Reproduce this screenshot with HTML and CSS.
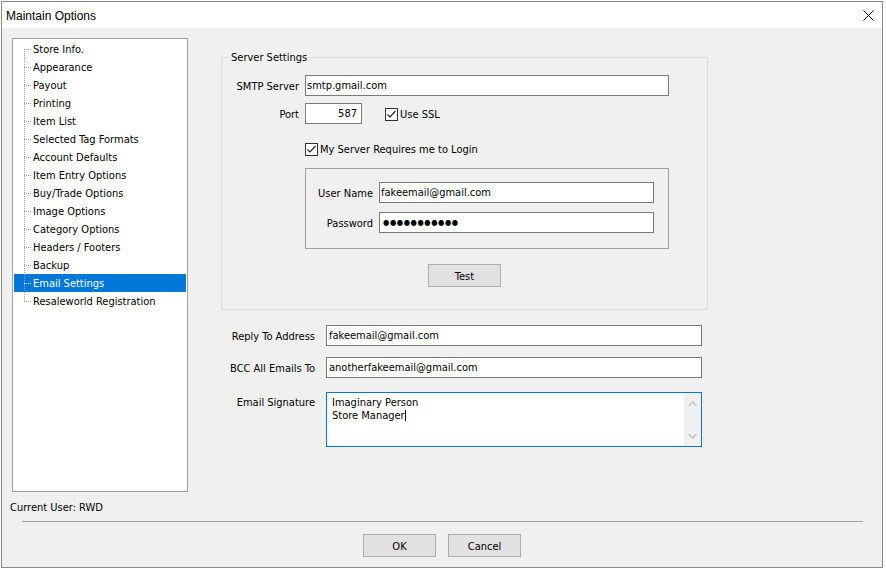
FILE: index.html
```html
<!DOCTYPE html>
<html lang="en">
<head>
    <meta charset="UTF-8">
    <meta name="viewport" content="width=device-width, initial-scale=1.0">
    <title>Maintain Options</title>
    <link rel="stylesheet" href="styles.css">
</head>
<body>
    <div class="window">
        <div class="titlebar">
            <span class="title">Maintain Options</span>
            <svg class="close" width="11" height="11" viewBox="0 0 11 11">
                <path d="M0.5 0.5 L10.5 10.5 M10.5 0.5 L0.5 10.5" stroke="#000" stroke-width="1" fill="none"/>
            </svg>
        </div>

        <div class="content">
            <div class="main">
                <!-- Menu lateral -->
                <div class="sidebar">
                    <ul class="tree">
                        <li>Store Info.</li>
                        <li>Appearance</li>
                        <li>Payout</li>
                        <li>Printing</li>
                        <li>Item List</li>
                        <li>Selected Tag Formats</li>
                        <li>Account Defaults</li>
                        <li>Item Entry Options</li>
                        <li>Buy/Trade Options</li>
                        <li>Image Options</li>
                        <li>Category Options</li>
                        <li>Headers / Footers</li>
                        <li>Backup</li>
                        <li class="selected">Email Settings</li>
                        <li>Resaleworld Registration</li>
                    </ul>
                    <div class="current-user">Current User: RWD</div>
                </div>

                <!-- Formulario -->
                <div class="form">
                    <div class="group">
                        <span class="group-title">Server Settings</span>

                        <div class="row">
                            <label class="label">SMTP Server</label>
                            <div class="field smtp">smtp.gmail.com</div>
                        </div>

                        <div class="row port-row">
                            <label class="label">Port</label>
                            <div class="field port">587</div>
                            <span class="check ssl">
                                <span class="box">
                                    <svg width="11" height="11" viewBox="0 0 11 11"><path d="M1.5 5.5 L4 8 L9.5 2" stroke="#222" stroke-width="1.2" fill="none"/></svg>
                                </span>
                                <span class="check-text">Use SSL</span>
                            </span>
                        </div>

                        <div class="row login-row">
                            <span class="check">
                                <span class="box">
                                    <svg width="11" height="11" viewBox="0 0 11 11"><path d="M1.5 5.5 L4 8 L9.5 2" stroke="#222" stroke-width="1.2" fill="none"/></svg>
                                </span>
                                <span class="check-text">My Server Requires me to Login</span>
                            </span>
                        </div>

                        <div class="login-box">
                            <div class="row">
                                <label class="label">User Name</label>
                                <div class="field login">fakeemail@gmail.com</div>
                            </div>
                            <div class="row password-row">
                                <label class="label">Password</label>
                                <div class="field login dots">●●●●●●●●●●●</div>
                            </div>
                        </div>

                        <div class="test-row">
                            <button class="btn">Test</button>
                        </div>
                    </div>

                    <div class="lower">
                        <div class="row">
                            <label class="label">Reply To Address</label>
                            <div class="field wide">fakeemail@gmail.com</div>
                        </div>
                        <div class="row bcc-row">
                            <label class="label">BCC All Emails To</label>
                            <div class="field wide">anotherfakeemail@gmail.com</div>
                        </div>
                        <div class="row signature-row">
                            <label class="label">Email Signature</label>
                            <div class="signature">
                                <div class="signature-text">
                                    Imaginary Person<br>
                                    Store Manager<span class="caret"></span>
                                </div>
                                <div class="scrollbar">
                                    <svg width="9" height="6" viewBox="0 0 9 6"><path d="M0.5 5 L4.5 1 L8.5 5" stroke="#c2c2c2" stroke-width="1.4" fill="none"/></svg>
                                    <svg width="9" height="6" viewBox="0 0 9 6"><path d="M0.5 1 L4.5 5 L8.5 1" stroke="#c2c2c2" stroke-width="1.4" fill="none"/></svg>
                                </div>
                            </div>
                        </div>
                    </div>
                </div>
            </div>

            <div class="footer">
                <div class="separator"></div>
                <div class="buttons">
                    <button class="btn">OK</button>
                    <button class="btn">Cancel</button>
                </div>
            </div>
        </div>
    </div>
</body>
</html>
```

FILE: styles.css
```css
* {
    margin: 0;
    padding: 0;
    box-sizing: border-box;
}

body {
    background: #fff;
    padding: 1px;
    font-family: "DejaVu Sans Condensed", "DejaVu Sans", sans-serif;
    font-stretch: condensed;
    font-size: 11px;
    color: #000;
}

.window {
    width: 882px;
    height: 567px;
    border: 1px solid #8a8a8a;
    background: #f0f0f0;
    display: flex;
    flex-direction: column;
}

/* Barra de titulo */
.titlebar {
    height: 26px;
    background: #fff;
    display: flex;
    justify-content: space-between;
    align-items: center;
    padding: 1px 8px 0 4px;
}

.title {
    font-family: "Liberation Sans", sans-serif;
    font-size: 12px;
    font-stretch: normal;
}

.content {
    flex: 1;
    display: flex;
    flex-direction: column;
}

.main {
    display: flex;
    padding: 10px 0 0 10px;
}

/* Arvore lateral */
.sidebar {
    width: 176px;
    display: flex;
    flex-direction: column;
}

.tree {
    height: 454px;
    background: #fff;
    border: 1px solid #a0a0a0;
    padding: 1px;
    list-style: none;
}

.tree li {
    position: relative;
    height: 18px;
    line-height: 18px;
    padding: 1px 0 0 19px;
    white-space: nowrap;
}

.tree li::before {
    content: "";
    position: absolute;
    left: 10px;
    top: 9px;
    width: 8px;
    height: 1px;
    background: repeating-linear-gradient(to right, #a0a0a0 0 1px, transparent 1px 2px);
}

.tree li::after {
    content: "";
    position: absolute;
    left: 10px;
    top: 0;
    width: 1px;
    height: 18px;
    background: repeating-linear-gradient(to bottom, #a0a0a0 0 1px, transparent 1px 2px);
}

.tree li:first-child::after {
    top: 9px;
    height: 9px;
}

.tree li:last-child::after {
    height: 10px;
}

.tree li.selected {
    background: #0078d7;
    color: #fff;
}

.tree li.selected::before {
    background: repeating-linear-gradient(to right, #d8e8f8 0 1px, transparent 1px 2px);
}

.current-user {
    margin: 9px 0 0 -2px;
    line-height: 14px;
}

/* Formulario */
.form {
    width: 487px;
    margin: 19px 0 0 33px;
}

.group {
    position: relative;
    border: 1px solid #dcdcdc;
    padding: 17px 0 22px 0;
}

.group-title {
    position: absolute;
    top: -8px;
    left: 7px;
    padding: 1px 2px 0;
    line-height: 14px;
    background: #f0f0f0;
}

.row {
    display: flex;
    align-items: center;
}

.label {
    width: 77px;
    margin-right: 6px;
    padding-top: 2px;
    text-align: right;
    white-space: nowrap;
}

.field {
    height: 21px;
    line-height: 19px;
    border: 1px solid #7a7a7a;
    background: #fff;
    padding: 0 2px 0 1px;
    white-space: nowrap;
}

.smtp {
    width: 364px;
}

.port-row {
    margin-top: 7px;
}

.port {
    width: 57px;
    text-align: right;
    padding-right: 4px;
}

.check {
    display: flex;
    align-items: center;
    gap: 2px;
    line-height: 14px;
}

.check-text {
    padding-top: 2px;
}

.box {
    width: 13px;
    height: 13px;
    border: 1px solid #333;
    background: #fff;
    display: flex;
}

.ssl {
    margin: 1px 0 0 23px;
}

.login-row {
    margin: 18px 0 0 83px;
    height: 14px;
}

.login-box {
    width: 364px;
    margin: 12px 0 0 83px;
    border: 1px solid #a0a0a0;
    padding: 13px 14px 15px 0;
}

.login-box .label {
    width: 67px;
}

.login {
    width: 275px;
}

.password-row {
    margin-top: 9px;
}

.dots {
    font-family: "DejaVu Sans", sans-serif;
    font-size: 8px;
    letter-spacing: 0.6px;
    padding-left: 3px;
}

.test-row {
    display: flex;
    justify-content: center;
    margin-top: 15px;
}

.btn {
    width: 73px;
    height: 23px;
    padding-top: 1px;
    background: #e1e1e1;
    border: 1px solid #adadad;
    font: inherit;
    color: #000;
}

/* Campos de baixo */
.lower {
    margin-top: 15px;
}

.lower .label {
    width: 94px;
    margin-right: 11px;
}

.wide {
    width: 376px;
    padding-left: 2px;
}

.bcc-row {
    margin-top: 11px;
}

.signature-row {
    margin-top: 14px;
    align-items: flex-start;
}

.signature-row .label {
    padding-top: 4px;
    line-height: 14px;
}

.signature {
    width: 376px;
    height: 55px;
    border: 1px solid #0078d7;
    background: #fff;
    display: flex;
}

.signature-text {
    flex: 1;
    padding: 3px 5px;
    line-height: 13px;
}

.caret {
    display: inline-block;
    width: 1px;
    height: 11px;
    background: #000;
    vertical-align: -2px;
}

.scrollbar {
    width: 17px;
    background: #f0f0f0;
    display: flex;
    flex-direction: column;
    justify-content: space-between;
    align-items: center;
    padding: 8px 0 7px;
}

/* Rodape */
.footer {
    margin-top: 6px;
}

.separator {
    width: 841px;
    height: 1px;
    margin-left: 20px;
    background: #a0a0a0;
}

.buttons {
    display: flex;
    justify-content: center;
    gap: 12px;
    margin-top: 12px;
}
```
